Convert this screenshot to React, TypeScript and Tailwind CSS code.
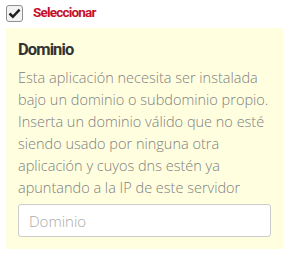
import React from 'react';

export default function App() {
  return (
    <div className="w-[290px] h-[256px] bg-white pt-[4px] pl-[6px] pr-[7px]">
      {/* Checkbox row */}
      <label className="flex items-center h-[18px] gap-[10px]">
        <span className="w-[17px] h-[17px] rounded-[3px] border border-[#8f8f8f] bg-[#f3f3f3] flex items-center justify-center">
          <svg width="13" height="13" viewBox="0 0 12 12">
            <path d="M1.4 6 L4.5 9 L10.7 2.5" fill="none" stroke="#1f1f1f" strokeWidth="2.3" />
          </svg>
        </span>
        <span className="text-[#c5102c] font-bold text-[13.5px] tracking-[-0.8px] leading-none [font-family:Roboto,sans-serif]">
          Seleccionar
        </span>
      </label>

      {/* Domain panel */}
      <div className="mt-[6px] bg-[#ffffe0] px-[12px] pt-[12px] pb-[12px]">
        <h3 className="text-[#333] font-bold text-[16.5px] tracking-[-0.9px] leading-[20px] [font-family:Roboto,sans-serif]">
          Dominio
        </h3>
        <p className="mt-[7px] text-[#808080] text-[14.5px] leading-[22px] font-light [font-family:'Open_Sans',sans-serif]">
          Esta aplicación necesita ser instalada bajo un dominio o subdominio propio. Inserta un dominio válido que no esté siendo usado por ninguna otra aplicación y cuyos dns estén ya apuntando a la IP de este servidor
        </p>
        <input
          placeholder="Dominio"
          className="mt-[5px] w-full h-[33px] bg-white border border-[#ccc] rounded-[3px] px-[10px] text-[15px] font-light text-[#555] placeholder:text-[#aaa] [font-family:'Open_Sans',sans-serif] outline-none"
        />
      </div>
    </div>
  );
}
